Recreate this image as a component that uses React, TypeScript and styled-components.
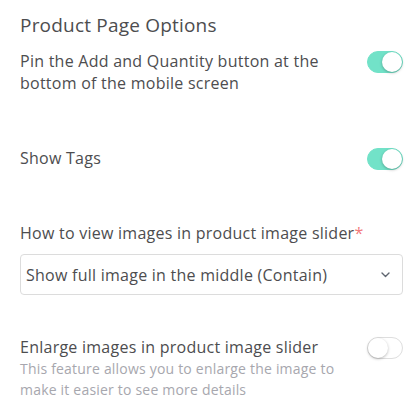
import styled, { createGlobalStyle } from 'styled-components';

const GlobalStyle = createGlobalStyle`
  body {
    margin: 0;
    background: #ffffff;
    font-family: 'Open Sans', 'Noto Sans', sans-serif;
    color: #4d4d4f;
  }
`;

const Page = styled.div`
  width: 417px;
  box-sizing: border-box;
  padding: 12px 14px 0 20px;
  display: flex;
  flex-direction: column;
`;

const Title = styled.h3`
  margin: 0;
  font-size: 19px;
  line-height: 27px;
  letter-spacing: 0.2px;
  font-weight: 400;
  color: #4d4d4f;
`;

const Block = styled.div<{ $top: number }>`
  margin-top: ${(p) => p.$top}px;
`;

const Row = styled.div`
  display: flex;
  justify-content: space-between;
  align-items: flex-start;
  gap: 20px;
`;

const Texts = styled.div`
  flex: 1;
  max-width: 320px;
`;

const Label = styled.div`
  font-size: 16px;
  line-height: 22px;
  letter-spacing: 0.25px;
  color: #4d4d4f;
`;

const Hint = styled.div`
  font-size: 14px;
  line-height: 21px;
  letter-spacing: 0.2px;
  color: #a7a7ae;
`;

const Star = styled.span`
  color: #f27a7a;
`;

const Track = styled.div<{ $on: boolean }>`
  flex: none;
  position: relative;
  width: 36px;
  height: 22px;
  margin-top: 1px;
  box-sizing: border-box;
  border-radius: 11px;
  background: ${(p) => (p.$on ? '#72e2c8' : '#ffffff')};
  border: 1px solid ${(p) => (p.$on ? '#72e2c8' : '#dedede')};
`;

const Knob = styled.div<{ $on: boolean }>`
  position: absolute;
  top: 0;
  left: ${(p) => (p.$on ? '14px' : '0')};
  width: 20px;
  height: 20px;
  border-radius: 50%;
  background: #ffffff;
  box-shadow: 0 1px 3px rgba(0, 0, 0, 0.28);
`;

const Select = styled.div`
  margin-top: 10px;
  height: 41px;
  box-sizing: border-box;
  border: 1px solid #dcdcdc;
  border-radius: 4px;
  padding: 0 12px 0 5px;
  display: flex;
  align-items: center;
  justify-content: space-between;
  font-size: 16px;
  letter-spacing: 0.25px;
  color: #4d4d4f;
`;

const Toggle = ({ on }: { on: boolean }) => (
  <Track $on={on}>
    <Knob $on={on} />
  </Track>
);

const Chevron = () => (
  <svg width="9" height="6" viewBox="0 0 9 6" fill="none">
    <path d="M1 1l3.5 3.5L8 1" stroke="#5f6670" strokeWidth="1.4" strokeLinecap="round" strokeLinejoin="round" />
  </svg>
);

export default function App() {
  return (
    <>
      <GlobalStyle />
      <Page>
        <Title>Product Page Options</Title>

        <Block $top={11}>
          <Row>
            <Texts>
              <Label>Pin the Add and Quantity button at the bottom of the mobile screen</Label>
            </Texts>
            <Toggle on />
          </Row>
        </Block>

        <Block $top={53}>
          <Row>
            <Label>Show Tags</Label>
            <Toggle on />
          </Row>
        </Block>

        <Block $top={52}>
          <Label>
            How to view images in product image slider<Star>*</Star>
          </Label>
          <Select>
            <span>Show full image in the middle (Contain)</span>
            <Chevron />
          </Select>
        </Block>

        <Block $top={41}>
          <Row>
            <Texts>
              <Label>Enlarge images in product image slider</Label>
              <Hint>This feature allows you to enlarge the image to make it easier to see more details</Hint>
            </Texts>
            <Toggle on={false} />
          </Row>
        </Block>
      </Page>
    </>
  );
}
